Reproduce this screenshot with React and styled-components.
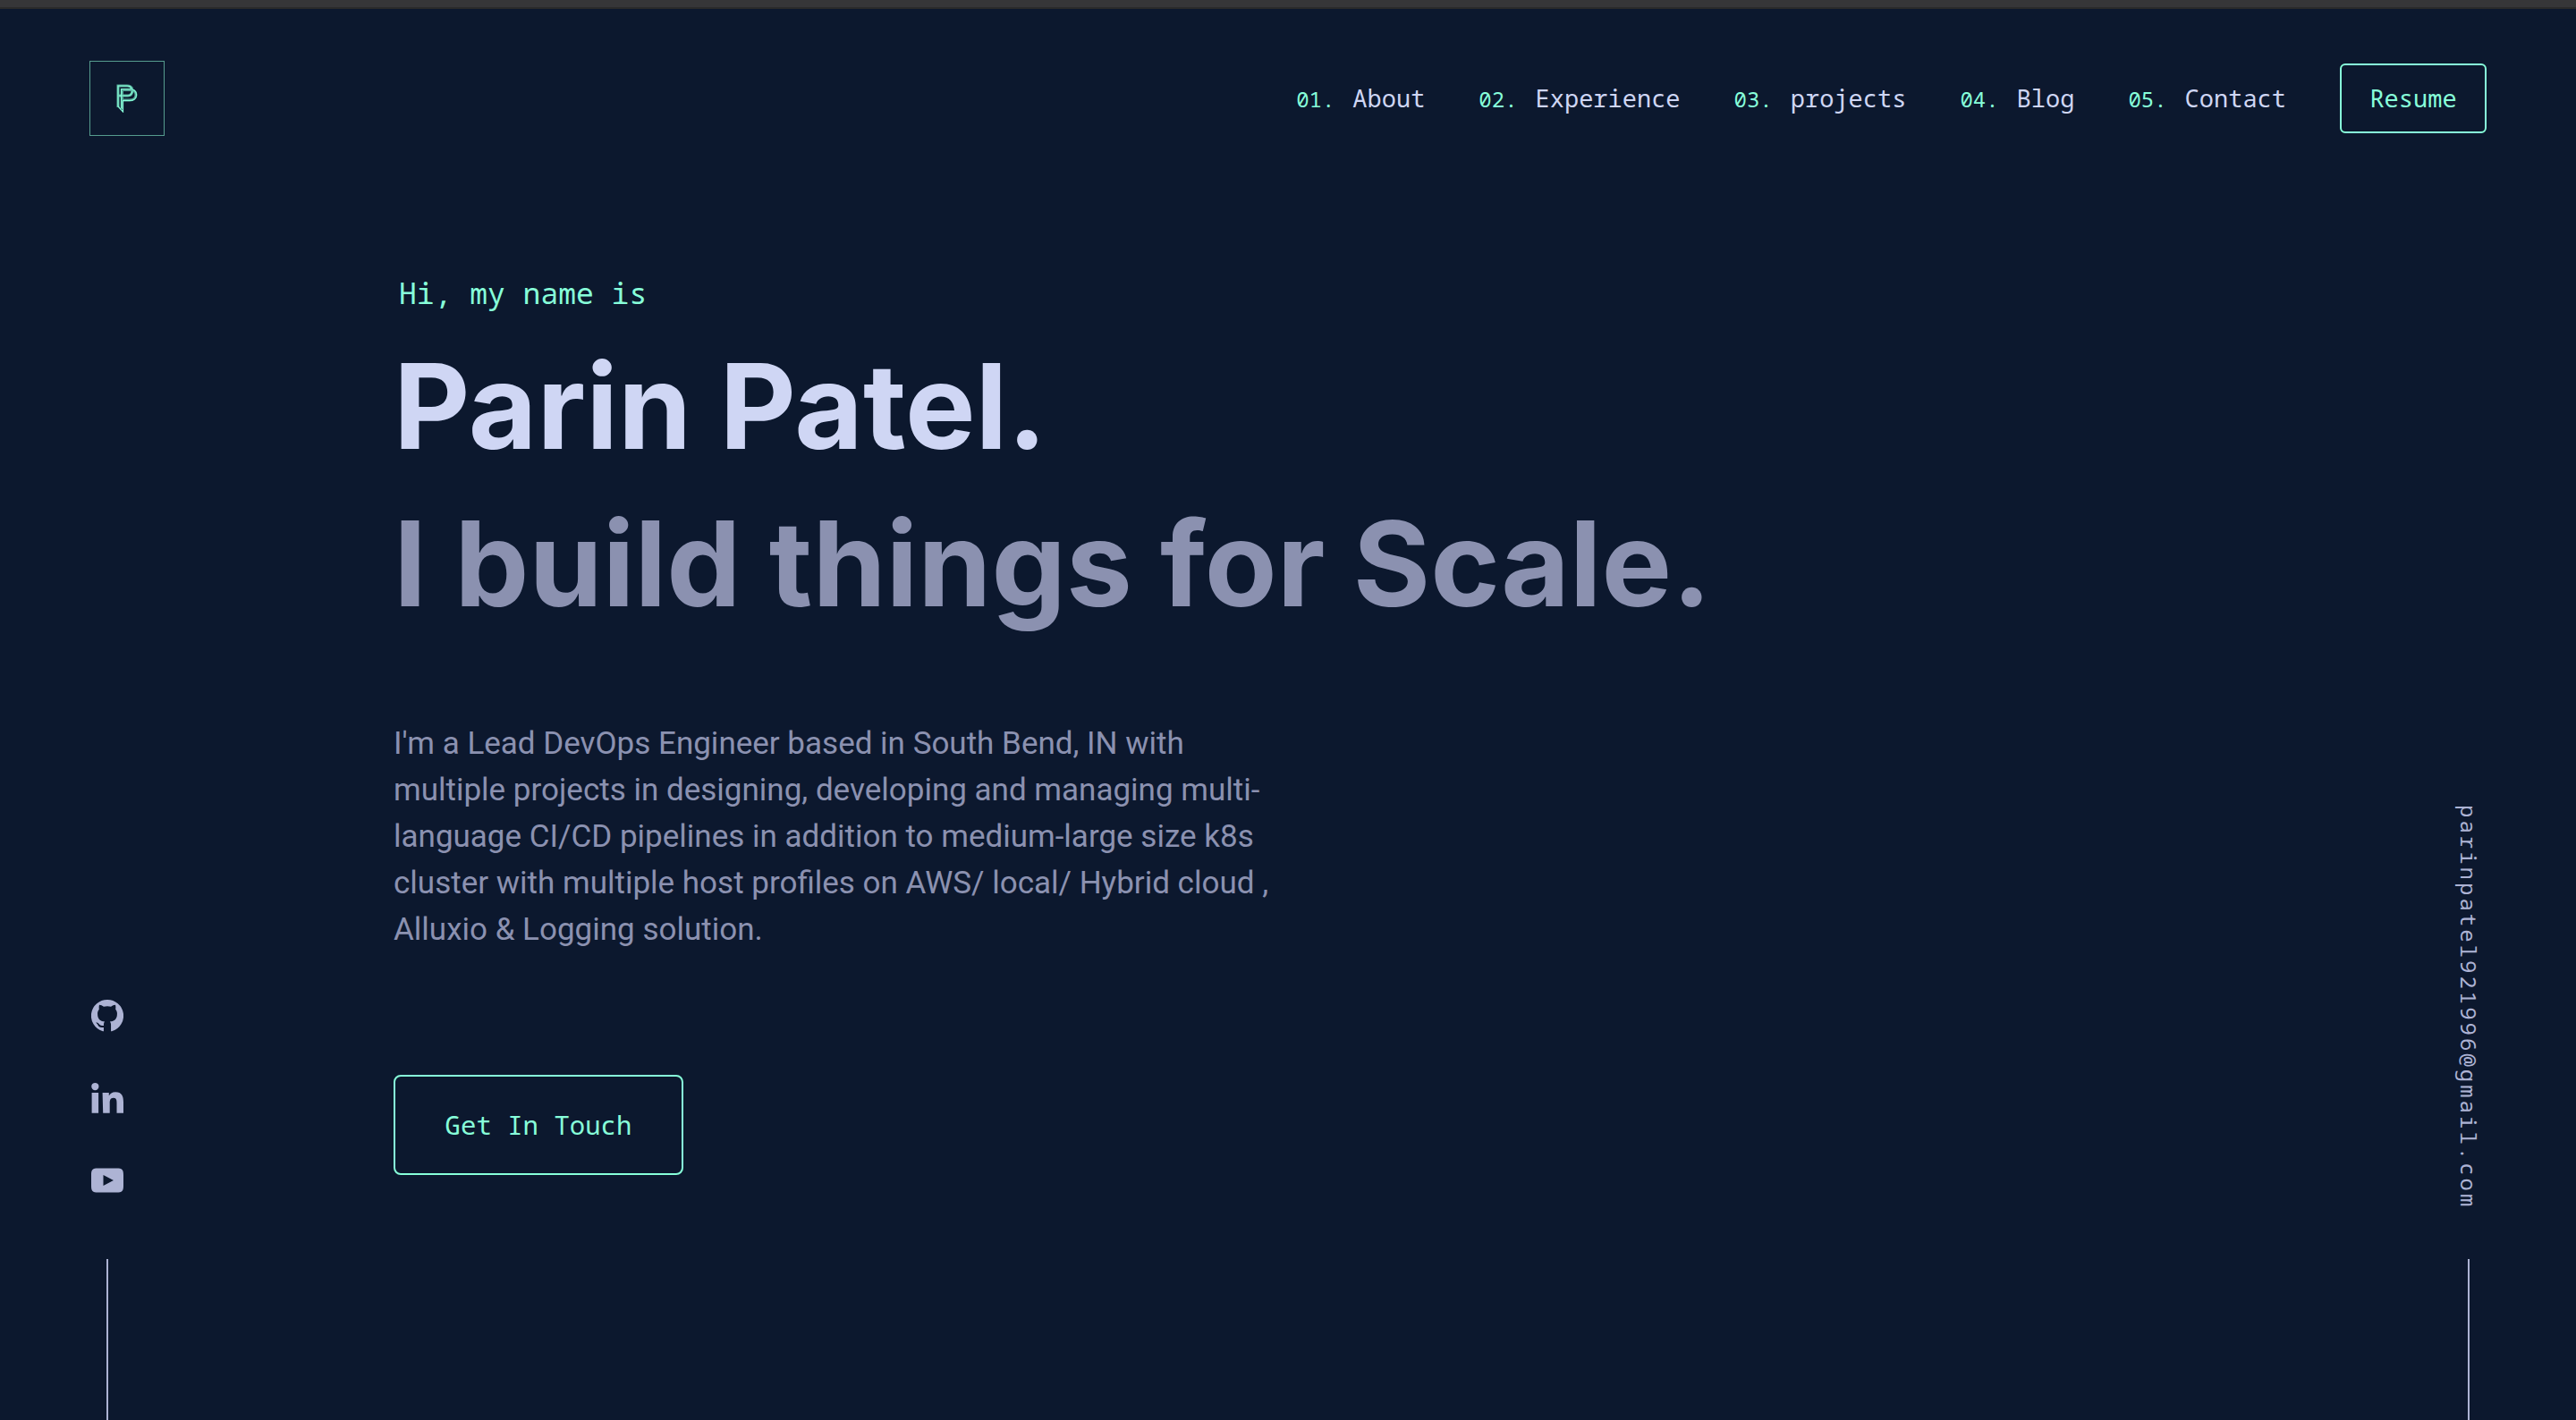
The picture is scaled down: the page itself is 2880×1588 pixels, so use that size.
import React from "react";
import styled, { createGlobalStyle } from "styled-components";

const color = {
  navy: "#0c182e",
  green: "#87ffda",
  lightest: "#cfd6f4",
  light: "#adb3d4",
  slate: "#8b91b0",
};
const sans = `Roboto, "Liberation Sans", sans-serif`;
const display = `Inter, "Liberation Sans", sans-serif`;
const mono = `"Noto Sans Mono", "DejaVu Sans Mono", monospace`;

const GlobalStyle = createGlobalStyle`
  *, *::before, *::after { box-sizing: border-box; }
  body {
    margin: 0;
    background: ${color.navy};
    color: ${color.slate};
    font-family: ${sans};
  }
  a { color: inherit; text-decoration: none; }
  h1, h2, p, ol, ul { margin: 0; padding: 0; }
  ol, ul { list-style: none; }
`;

const Page = styled.div`
  display: flex;
  flex-direction: column;
  min-height: 100vh;
  border-top: 8px solid #363638;
`;

const Header = styled.header`
  display: flex;
  align-items: center;
  justify-content: space-between;
  height: 202px;
  padding: 0 100px;
  border-top: 2px solid #2a2a2a;
`;

const LogoLink = styled.a`
  display: flex;
  align-items: center;
  justify-content: center;
  width: 84px;
  height: 84px;
  border: 1px solid #569c8e;
`;

const Nav = styled.nav`
  display: flex;
  align-items: center;
  gap: 60px;
  font-family: ${mono};
`;

const NavList = styled.ol`
  display: flex;
  gap: 60px;
`;

const NavLink = styled.a`
  display: flex;
  align-items: baseline;
  gap: 20px;
  color: ${color.lightest};
  font-size: 27px;
  line-height: 36px;
`;

const NavNumber = styled.span`
  color: ${color.green};
  font-size: 24px;
`;

const OutlineButton = styled.button`
  width: ${(p) => (p.$large ? 324 : 164)}px;
  height: ${(p) => (p.$large ? 112 : 78)}px;
  padding: 0;
  border: 2px solid ${color.green};
  border-radius: ${(p) => (p.$large ? 8 : 6)}px;
  background: transparent;
  color: ${color.green};
  font-family: ${mono};
  font-size: ${(p) => (p.$large ? 29 : 27)}px;
  line-height: 36px;
`;

const Body = styled.div`
  display: grid;
  grid-template-columns: 340px 1fr 340px;
  flex: 1;
  padding: 0 100px;
`;

const Rail = styled.aside`
  display: flex;
  flex-direction: column;
  align-items: center;
  justify-self: ${(p) => p.$side};
  align-self: end;
  width: 40px;
  gap: ${(p) => p.$gap}px;

  &::after {
    content: "";
    width: 2px;
    height: 180px;
    background: ${color.light};
  }
`;

const SocialList = styled.ul`
  display: flex;
  flex-direction: column;
  gap: 56px;
`;

const SocialLink = styled.a`
  display: block;
  height: 36px;
  color: ${color.light};
`;

const EmailLink = styled.a`
  writing-mode: vertical-rl;
  color: ${color.light};
  font-family: ${mono};
  font-size: 24px;
  line-height: 36px;
  letter-spacing: 3px;
`;

const Hero = styled.main`
  display: flex;
  flex-direction: column;
  align-items: flex-start;
  padding-top: 94px;
`;

const Greeting = styled.p`
  padding-left: 6px;
  margin-bottom: 14px;
  color: ${color.green};
  font-family: ${mono};
  font-size: 33px;
  line-height: 48px;
`;

const Name = styled.h1`
  color: ${color.lightest};
  font-family: ${display};
  font-size: 132px;
  font-weight: 700;
  line-height: 176px;
`;

const Tagline = styled(Name).attrs({ as: "h2" })`
  color: ${color.slate};
`;

const Intro = styled.p`
  max-width: 1000px;
  margin-top: 88px;
  font-size: 35px;
  line-height: 52px;
`;

const HeroAction = styled.div`
  padding-top: 136px;
`;

const sections = ["About", "Experience", "projects", "Blog", "Contact"];

const socials = [
  {
    name: "GitHub",
    href: "https://github.com",
    path: "M12 0a12 12 0 0 0-3.8 23.400c.4.1.8.2 1.100.1v-5.200c.1-1 .3-1.500.8-2-2.900-.3-5.400-1.300-5.400-6 0-1.300.4-2.300 1.200-3.200-.2-.8-.2-2 .1-3.200 1.100 0 2.300.6 3.300 1.300a11.500 11.500 0 0 1 5.400 0c1-.7 2.200-1.300 3.300-1.300.3 1.200.3 2.400.1 3.200.8.9 1.200 1.900 1.200 3.200 0 4.700-2.500 5.700-5.400 6 .5.5.8 1.200.8 2.400v4.800c.3.1.7 0 1.100-.1A12 12 0 0 0 12 0zM9.300 20.500c-3.200.6-4-.9-4.400-1.900-.3-.7-.9-1.200-1.400-1.500.9-.5 1.800.2 2.400 1.100.9 1.300 2 1.300 3.400.9z",
  },
  {
    name: "LinkedIn",
    href: "https://www.linkedin.com",
    path: "M.4 8h5v15.2h-5zM2.9.6a2.75 2.75 0 1 1 0 5.5 2.75 2.75 0 0 1 0-5.5zM8.4 8h4.8v2.1h.1c.7-1.3 2.3-2.6 4.7-2.6 5 0 6 3.3 6 7.5v8.2h-5v-7.3c0-1.8 0-4-2.4-4s-2.8 1.9-2.8 3.9v7.4h-5z",
  },
  {
    name: "YouTube",
    href: "https://www.youtube.com",
    path: "M5 3h14c4 0 5 1 5 5v8c0 4-1 5-5 5H5c-4 0-5-1-5-5V8c0-4 1-5 5-5zM9 8v8l7.6-4z",
  },
];

function Logo() {
  return (
    <svg width="24" height="32" viewBox="0 0 24 32" fill="none" aria-hidden="true">
      <g stroke="#56a999" strokeWidth="3">
        <path d="M2 26V2h10c3 0 5 1 6 4" />
        <path d="M6.500 28V6.500H15c4 0 7 2 7 5.500s-3 6-7 6H7" />
        <path d="M3 13h10c3 0 4.500-2 5-5" />
      </g>
      <g stroke={color.green} strokeWidth="1.200">
        <path d="M2 25V2h10c2.500 0 4.500 1 5 3" />
        <path d="M2 25l5.500 6V18.500H15c4.500 0 7.500-2.500 7.500-6.500S19.500 5.500 15 5.500H5.500V27" />
        <path d="M3 13h10c3 0 4.500-2 5-5.500" />
      </g>
    </svg>
  );
}

export default function App() {
  return (
    <>
      <GlobalStyle />
      <Page>
        <Header>
          <LogoLink href="#home" aria-label="Home">
            <Logo />
          </LogoLink>
          <Nav aria-label="Main">
            <NavList>
              {sections.map((label, i) => (
                <li key={label}>
                  <NavLink href={`#${label.toLowerCase()}`}>
                    <NavNumber>{`0${i + 1}.`}</NavNumber>
                    {label}
                  </NavLink>
                </li>
              ))}
            </NavList>
            <OutlineButton type="button">Resume</OutlineButton>
          </Nav>
        </Header>
        <Body>
          <Rail $side="start" $gap={70}>
            <SocialList>
              {socials.map((s) => (
                <li key={s.name}>
                  <SocialLink href={s.href} aria-label={s.name}>
                    <svg width="36" height="36" viewBox="0 0 24 24" fill="currentColor" fillRule="evenodd" aria-hidden="true">
                      <path d={s.path} />
                    </svg>
                  </SocialLink>
                </li>
              ))}
            </SocialList>
          </Rail>
          <Hero>
            <Greeting>Hi, my name is</Greeting>
            <Name>Parin Patel.</Name>
            <Tagline>I build things for Scale.</Tagline>
            <Intro>
              I'm a Lead DevOps Engineer based in South Bend, IN with multiple projects in designing,
              developing and managing multi-language CI/CD pipelines in addition to medium-large size
              k8s cluster with multiple host profiles on AWS/ local/ Hybrid cloud , Alluxio &amp;
              Logging solution.
            </Intro>
            <HeroAction>
              <OutlineButton type="button" $large>Get In Touch</OutlineButton>
            </HeroAction>
          </Hero>
          <Rail $side="end" $gap={56}>
            <EmailLink href="mailto:parinpatel921996@gmail.com">parinpatel921996@gmail.com</EmailLink>
          </Rail>
        </Body>
      </Page>
    </>
  );
}
